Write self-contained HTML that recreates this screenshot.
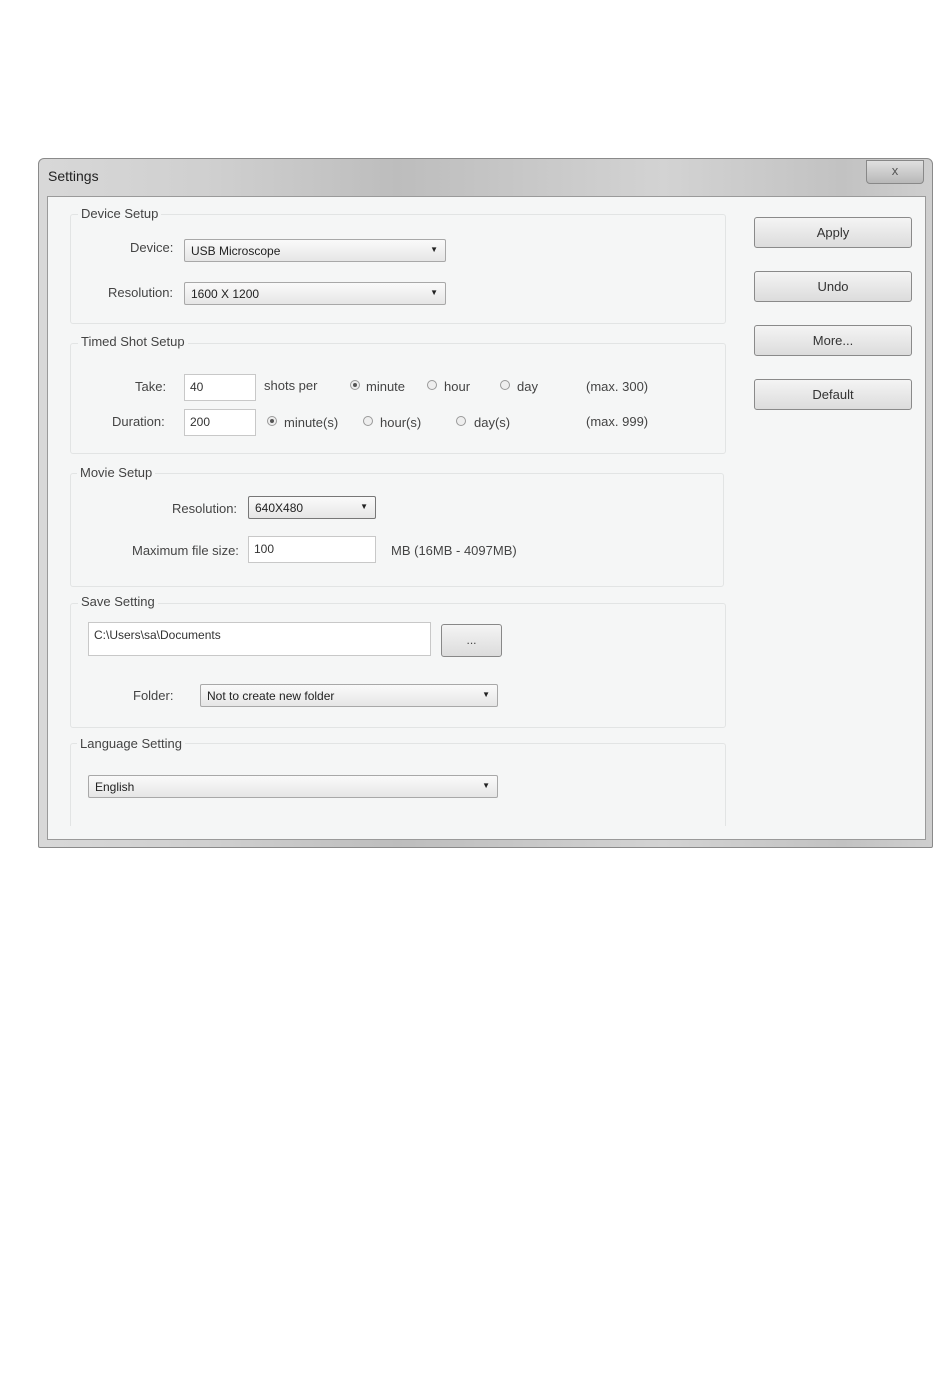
<!DOCTYPE html>
<html><head><style>
body{margin:0;width:950px;height:1397px;background:#fff;position:relative;font-family:"Liberation Sans",sans-serif;font-size:12px;color:#333;overflow:hidden}
.a{position:absolute}
.win{left:38px;top:158px;width:893px;height:688px;border:1px solid #8a8a8a;border-radius:6px 6px 2px 2px;background:linear-gradient(90deg,#d8d8d8,#cfcfcf 20%,#bdbdbd 40%,#d3d3d3 70%,#c2c2c2 90%,#cfcfcf)}
.title{left:48px;top:168px;font-size:14px;color:#222}
.client{left:47px;top:196px;width:877px;height:642px;background:#f5f6f6;border:1px solid #9a9a9a}
.grp{border:1px solid #e2e4e4;border-radius:3px}
.lg{background:#f5f6f6;padding:0 3px;font-size:13px;color:#444}
.cb{border:1px solid #a8a8a8;border-radius:2px;background:linear-gradient(#fafafa,#e6e6e6);height:23px;box-sizing:border-box;padding:4px 6px;font-size:12px;color:#222}
.cb::after{content:"▼";position:absolute;right:7px;top:5px;font-size:8px;color:#222}
.tb{border:1px solid #c8c8c8;background:#fff;height:27px;box-sizing:border-box;padding:5px 5px;font-size:12px;color:#333}
.btn{left:754px;width:158px;height:31px;border:1px solid #8a8a8a;border-radius:3px;background:linear-gradient(#f4f4f4,#dcdcdc);text-align:center;line-height:30px;font-size:13px;color:#333;box-sizing:border-box}
.lbl{font-size:13px;color:#444}
.r{width:10px;height:10px;border:1px solid #999;border-radius:50%;background:#eee;box-sizing:border-box}
.r.on::after{content:"";position:absolute;left:2px;top:2px;width:4px;height:4px;border-radius:50%;background:#555}
</style></head><body>
<div class="a win"></div>
<div class="a title">Settings</div>
<div class="a" style="left:866px;top:160px;width:56px;height:22px;border:1px solid #888;border-radius:0 0 4px 4px;background:linear-gradient(#e0e0e0,#b8b8b8);text-align:center;color:#555;font-size:13px;line-height:20px">x</div>
<div class="a client"></div>

<div class="a grp" style="left:70px;top:214px;width:654px;height:108px"></div>
<div class="a lg" style="left:78px;top:206px">Device Setup</div>
<div class="a lbl" style="left:130px;top:240px">Device:</div>
<div class="a cb" style="left:184px;top:239px;width:262px">USB Microscope</div>
<div class="a lbl" style="left:108px;top:285px">Resolution:</div>
<div class="a cb" style="left:184px;top:282px;width:262px">1600 X 1200</div>

<div class="a grp" style="left:70px;top:343px;width:654px;height:109px"></div>
<div class="a lg" style="left:78px;top:334px">Timed Shot Setup</div>
<div class="a lbl" style="left:135px;top:379px">Take:</div>
<div class="a tb" style="left:184px;top:374px;width:72px">40</div>
<div class="a lbl" style="left:264px;top:378px">shots per</div>
<div class="a r on" style="left:350px;top:380px"></div><div class="a lbl" style="left:366px;top:379px">minute</div>
<div class="a r" style="left:427px;top:380px"></div><div class="a lbl" style="left:444px;top:379px">hour</div>
<div class="a r" style="left:500px;top:380px"></div><div class="a lbl" style="left:517px;top:379px">day</div>
<div class="a lbl" style="left:586px;top:379px">(max. 300)</div>
<div class="a lbl" style="left:112px;top:414px">Duration:</div>
<div class="a tb" style="left:184px;top:409px;width:72px">200</div>
<div class="a r on" style="left:267px;top:416px"></div><div class="a lbl" style="left:284px;top:415px">minute(s)</div>
<div class="a r" style="left:363px;top:416px"></div><div class="a lbl" style="left:380px;top:415px">hour(s)</div>
<div class="a r" style="left:456px;top:416px"></div><div class="a lbl" style="left:474px;top:415px">day(s)</div>
<div class="a lbl" style="left:586px;top:414px">(max. 999)</div>

<div class="a grp" style="left:70px;top:473px;width:652px;height:112px"></div>
<div class="a lg" style="left:77px;top:465px">Movie Setup</div>
<div class="a lbl" style="left:172px;top:501px">Resolution:</div>
<div class="a cb" style="left:248px;top:496px;width:128px;border-color:#777">640X480</div>
<div class="a lbl" style="left:132px;top:543px">Maximum file size:</div>
<div class="a tb" style="left:248px;top:536px;width:128px">100</div>
<div class="a lbl" style="left:391px;top:543px">MB (16MB - 4097MB)</div>

<div class="a grp" style="left:70px;top:603px;width:654px;height:123px"></div>
<div class="a lg" style="left:78px;top:594px">Save Setting</div>
<div class="a tb" style="left:88px;top:622px;width:343px;height:34px">C:\Users\sa\Documents</div>
<div class="a" style="left:441px;top:624px;width:59px;height:31px;border:1px solid #888;border-radius:3px;background:linear-gradient(#f4f4f4,#dcdcdc);text-align:center;line-height:30px;color:#444">...</div>
<div class="a lbl" style="left:133px;top:688px">Folder:</div>
<div class="a cb" style="left:200px;top:684px;width:298px">Not to create new folder</div>

<div class="a grp" style="left:70px;top:743px;width:654px;height:82px;border-bottom:none;border-radius:3px 3px 0 0"></div>
<div class="a lg" style="left:77px;top:736px">Language Setting</div>
<div class="a cb" style="left:88px;top:775px;width:410px">English</div>

<div class="a btn" style="top:217px">Apply</div>
<div class="a btn" style="top:271px">Undo</div>
<div class="a btn" style="top:325px">More...</div>
<div class="a btn" style="top:379px">Default</div>
</body></html>
